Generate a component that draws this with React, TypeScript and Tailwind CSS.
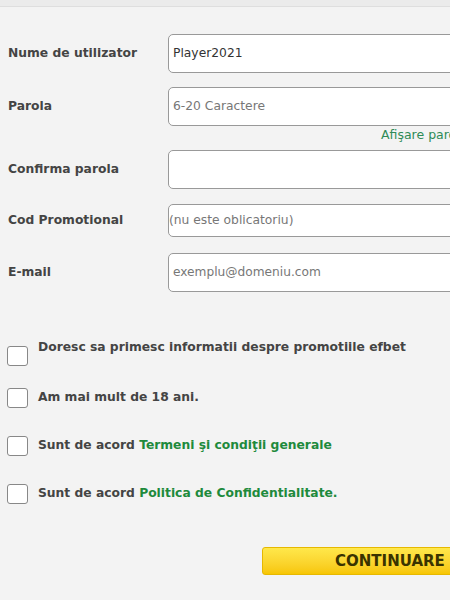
import React from "react";

const font = { fontFamily: '"DejaVu Sans", Verdana, sans-serif' };

function Row({ label, h, mt, children }: { label: string; h: string; mt: string; children?: React.ReactNode }) {
  return (
    <div className={`flex items-center ${mt}`}>
      <div className="w-[168px] shrink-0 pl-2 text-[12.3px] font-bold text-[#444]">{label}</div>
      <div className={`w-[320px] shrink-0 ${h} rounded-[5px] border border-[#999] bg-white flex items-center pl-[4px] text-[12.3px] text-[#333]`}>
        {children}
      </div>
    </div>
  );
}

function Check({ mt, children, textClass }: { mt: string; children: React.ReactNode; textClass: string }) {
  return (
    <div className={`flex items-start ${mt}`}>
      <div className="ml-[7px] w-[21px] h-[20px] shrink-0 rounded-[3px] border border-[#888] bg-white" />
      <div className={`ml-[10px] text-[12.3px] font-bold text-[#444] whitespace-nowrap ${textClass}`}>{children}</div>
    </div>
  );
}

export default function App() {
  return (
    <div className="w-[450px] h-[600px] overflow-hidden bg-[#f3f3f3]" style={font}>
      <div className="h-[7px] bg-[#ebebeb] border-b border-[#dedede]" />
      <Row label="Nume de utilizator" h="h-[39px]" mt="mt-[27px]">
        <span>Player2021</span>
      </Row>
      <Row label="Parola" h="h-[39px]" mt="mt-[14px]">
        <span className="text-[#777]">6-20 Caractere</span>
      </Row>
      <div className="pl-[381px] h-[23px] text-[12.5px] leading-[17px] text-[#2e8b57] whitespace-nowrap">Afişare parola</div>
      <Row label="Confirma parola" h="h-[39px]" mt="mt-[1px]" />
      <Row label="Cod Promotional" h="h-[33px]" mt="mt-[15px]">
        <span className="text-[#777] -ml-[4px]">(nu este oblicatoriu)</span>
      </Row>
      <Row label="E-mail" h="h-[39px]" mt="mt-[16px]">
        <span className="text-[#777] text-[12.2px]">exemplu@domeniu.com</span>
      </Row>
      <Check mt="mt-[54px]" textClass="-mt-[8px]">Doresc sa primesc informatii despre promotiile efbet</Check>
      <Check mt="mt-[22px]" textClass="">Am mai mult de 18 ani.</Check>
      <Check mt="mt-[28px]" textClass="">
        Sunt de acord <span className="text-[#1e8a3c]">Termeni şi condiţii generale</span>
      </Check>
      <Check mt="mt-[28px]" textClass="">
        Sunt de acord <span className="text-[#1e8a3c]">Politica de Confidentialitate.</span>
      </Check>
      <div className="mt-[43px] pl-[262px]">
        <div className="w-[260px] h-[28px] rounded-[3px] border border-[#e6b800] bg-gradient-to-b from-[#ffe84a] to-[#f7c600] flex items-center pl-[72px] text-[15px] font-bold text-[#3a3300]">
          CONTINUARE
        </div>
      </div>
    </div>
  );
}
